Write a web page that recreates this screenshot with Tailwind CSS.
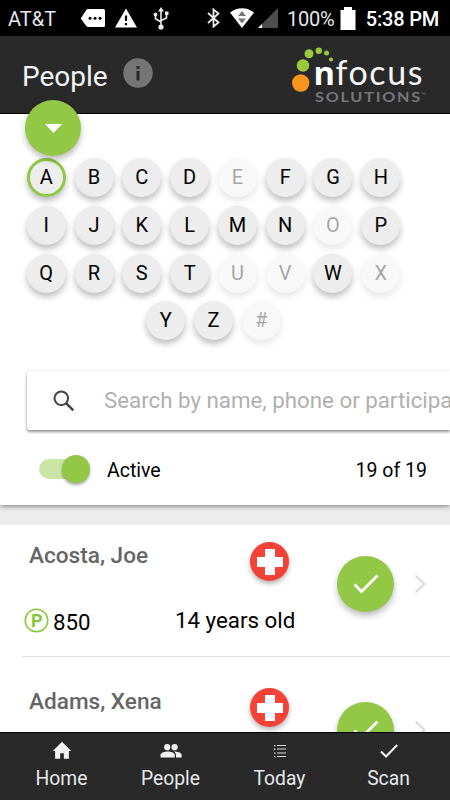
<!DOCTYPE html>
<html lang="en">
  <head>
    <meta charset="UTF-8" />
    <meta name="viewport" content="width=device-width, initial-scale=1.0" />
    <title>People - nFocus Solutions</title>
    <script src="https://cdn.jsdelivr.net/npm/@tailwindcss/browser@4"></script>
  </head>
  <body class="w-[450px] h-[800px] overflow-hidden flex flex-col bg-white font-['Roboto',sans-serif] text-black">
    <!-- Status bar -->
    <div class="h-[36px] shrink-0 bg-black text-white flex items-center pl-2 pr-[11px] text-[20px] leading-none">
      <span class="w-[72px] pt-px text-gray-200">AT&amp;T</span>
      <svg class="w-[26px] h-5 mt-px" viewBox="0 0 26 20">
        <path d="M8 0h15.500q1.500 0 1.500 1.500v15q0 1.500-1.500 1.500H8q-1 0-1.700-1L.7 9.500 6.300 1Q7 0 8 0z" fill="#fff" />
        <circle cx="10" cy="9.300" r="1.500" /><circle cx="15" cy="9.300" r="1.500" /><circle cx="20" cy="9.300" r="1.500" />
      </svg>
      <svg class="w-[22px] h-5 ml-[9px]" viewBox="0 0 22 20">
        <path d="M11 .5 22 19.500H0z" fill="#fff" />
        <path d="M9.900 7.500h2.200v5.500H9.900zM9.900 15h2.200v2.200H9.900z" />
      </svg>
      <svg class="w-4 h-[23px] ml-4" viewBox="0 0 16 23" fill="none" stroke="#eee" stroke-width="1.600">
        <path d="M8 3v16M2.500 8.500v3.200L8 15M13.500 7v4L8 13.500" />
        <path d="M8 0l3 4.500H5zM12 4.500h3.500V8H12z" fill="#eee" stroke="none" />
        <circle cx="2.500" cy="7.500" r="1.900" fill="#eee" stroke="none" />
        <circle cx="8" cy="20" r="2.600" fill="#eee" stroke="none" />
      </svg>
      <svg class="w-[14px] h-5 ml-[38px]" viewBox="0 0 14 20" fill="none" stroke="#eee" stroke-width="1.800">
        <path d="M1 5l10.500 9.500L6.500 18.500V1.500L11.500 5.500 1 15" />
      </svg>
      <svg class="w-6 h-5 ml-[9px]" viewBox="0 0 24 20">
        <path d="M0 4.500C7-1.200 17-1.200 24 4.500L12 20z" fill="#fff" />
        <path d="M12 3l4 5H8zM8 10.500h8l-4 5z" fill="#777" />
      </svg>
      <svg class="w-5 h-5 ml-[4px]" viewBox="0 0 20 20">
        <path d="M20 0v20H0z" fill="#4d4d4d" />
        <path d="M4 16v4H0z" fill="#fff" />
      </svg>
      <span class="ml-[9px] pt-px text-gray-200 tracking-[-0.2px]">100%</span>
      <svg class="w-4 h-[23px] ml-[5px]" viewBox="0 0 16 23">
        <path d="M4 0h8v3h3.500v20H.5V3H4z" fill="#fff" />
      </svg>
      <span class="ml-auto pt-px font-medium whitespace-nowrap tracking-[-0.2px]">5:38 PM</span>
    </div>

    <!-- Header -->
    <header class="relative z-10 h-[78px] shrink-0 bg-[#292929] border-b border-black flex items-start pl-[22px]">
      <h1 class="mt-[25px] text-[28px] leading-8 text-gray-100">People</h1>
      <svg class="w-[30px] h-[30px] mt-[22px] ml-[15px]" viewBox="0 0 30 30">
        <circle cx="15" cy="15" r="14.700" fill="#757575" />
        <path d="M13.500 8h3v3h-3zM13.500 13h3v9.500h-3z" fill="#292929" />
      </svg>
      <svg class="w-[140px] h-[64px] mt-[6px] ml-auto mr-[20px]" viewBox="290 42 140 64">
        <circle cx="300.700" cy="83" r="8.700" fill="#f7941e" />
        <g fill="#9aca3c">
          <circle cx="303" cy="65.500" r="6.200" />
          <circle cx="309" cy="53.700" r="4.500" />
          <circle cx="318.800" cy="50.700" r="3.200" />
          <circle cx="326.500" cy="53" r="2.500" />
          <circle cx="331" cy="59.500" r="2.100" />
        </g>
        <text x="313.500" y="84.500" textLength="21.500" lengthAdjust="spacingAndGlyphs" font-family="Open Sans" font-weight="700" font-size="33" fill="#fff">n</text>
        <text x="335.500" y="84.500" textLength="87" font-family="Lato" font-size="34" fill="#f5f5f5">focus</text>
        <text x="315" y="102" textLength="107" lengthAdjust="spacingAndGlyphs" letter-spacing="1.500" font-family="Lato" font-weight="700" font-size="13.500" fill="#77787b">SOLUTIONS</text>
        <text x="421" y="95" font-family="Lato" font-size="3" fill="#77787b">TM</text>
      </svg>
      <button class="absolute left-[25px] top-[64px] w-14 h-14 rounded-full bg-[#92c846] shadow-[0_4px_6px_rgba(0,0,0,0.26)] flex items-center justify-center">
        <svg class="w-[17px] h-[9px]" viewBox="0 0 17 9"><path d="M0 0h17L8.500 9z" fill="#fff" /></svg>
      </button>
    </header>

    <!-- Filter panel -->
    <section class="relative h-[391px] shrink-0 bg-white shadow-[0_1px_5px_rgba(0,0,0,0.5)]">
      <div id="letters" class="pt-[40px] pl-[22px] w-[405px] flex flex-wrap justify-center"></div>

      <div class="mt-[26px] ml-[27px] h-[59px] rounded-l-[3px] bg-white shadow-[0_2px_3px_rgba(0,0,0,0.4),0_0_3px_rgba(0,0,0,0.12)] flex items-center overflow-hidden">
        <svg class="w-[22px] h-[22px] ml-[26px] shrink-0" viewBox="0 0 22 22" fill="none" stroke="#444">
          <circle cx="8.300" cy="8.300" r="6.800" stroke-width="2" />
          <path d="M13.300 13.300l7 7" stroke-width="2.600" />
        </svg>
        <span class="ml-[29px] pt-px text-[22.300px] text-[#b0b0b0] whitespace-nowrap">Search by name, phone or participant ID</span>
      </div>

      <div class="mt-[25px] pl-[39px] pr-[23px] h-7 flex items-center text-[19.500px]">
        <div class="relative w-[51px] h-7 flex items-center">
          <div class="w-[48px] h-5 rounded-full bg-[#cbe5a6]"></div>
          <div class="absolute right-0 top-0 w-7 h-7 rounded-full bg-[#92c846] shadow-[0_2px_3px_rgba(0,0,0,0.35)]"></div>
        </div>
        <span class="ml-[17px] pt-[3px]">Active</span>
        <span class="ml-auto pt-[3px]">19 of 19</span>
      </div>
    </section>

    <!-- People list -->
    <main id="people" class="flex-1 min-h-0 overflow-hidden bg-[#ececec] pt-[20px]"></main>

    <!-- Bottom navigation -->
    <nav class="relative z-10 h-[68px] shrink-0 bg-[#292929] border-t border-black px-[7px] grid grid-cols-4 text-[19.300px] leading-6 text-gray-200">
      <a class="flex flex-col items-center">
        <svg class="w-[22px] h-[22px] mt-[7px]" viewBox="0 0 24 24" fill="#f2f2f2"><path d="M10 20.500v-6h4v6h5.500v-8.500H22L12 2 2 12h2.500v8.500z" /></svg>
        <span class="mt-[5px]">Home</span>
      </a>
      <a class="flex flex-col items-center">
        <svg class="w-6 h-[22px] mt-[7px]" viewBox="0 0 24 22" fill="#f2f2f2">
          <circle cx="8.200" cy="7.200" r="3.100" /><circle cx="15.600" cy="7.200" r="3.100" />
          <path d="M1.500 17.500v-2.200c0-2.700 4.800-3.700 7.200-3.700s7.100 1 7.100 3.700v2.200zM17 17.500v-2.200c0-1.600-.9-2.700-2-3.700 3 0 7.700 1 7.700 3.700v2.200z" />
        </svg>
        <span class="mt-[5px]">People</span>
      </a>
      <a class="flex flex-col items-center">
        <svg class="w-3 h-[22px] mt-[7px]" viewBox="0 0 12 22" fill="#ddd">
          <path d="M0 5h1.500v1.200H0zM3 5h9v1.100H3zM0 8.500h1.500v1.200H0zM3 8.500h9v1.100H3zM0 12.500h1.500v1.200H0zM3 12.500h9v1.100H3zM0 16h1.500v1.200H0zM3 16h9v1.100H3z" />
        </svg>
        <span class="mt-[5px]">Today</span>
      </a>
      <a class="flex flex-col items-center">
        <svg class="w-[18px] h-[22px] mt-[7px]" viewBox="0 0 18 22" fill="none" stroke="#f2f2f2" stroke-width="2.100"><path d="M1 11.500l5 5L17.200 5" /></svg>
        <span class="mt-[5px]">Scan</span>
      </a>
    </nav>

    <script>
      const selected = "A";
      const empty = "EOUVX#";

      document.getElementById("letters").innerHTML = [..."ABCDEFGHIJKLMNOPQRSTUVWXYZ#"]
        .map((letter) => {
          const ring = letter === selected ? "border-[3px] border-[#92c846]" : "";
          const state = empty.includes(letter) ? "opacity-35" : "";
          return `
            <div class="w-[47.800px] h-[47.800px] flex justify-center pt-[4px]">
              <button class="w-[39px] h-[39px] pb-px rounded-full bg-[#ededed] text-[20px] leading-none flex items-center justify-center shadow-[0_4px_6px_rgba(0,0,0,0.26)] ${ring} ${state}">${letter}</button>
            </div>`;
        })
        .join("");

      const people = [
        { name: "Acosta, Joe", points: 850, age: 14 },
        { name: "Adams, Xena" },
      ];

      const pointsLine = (points) => `
        <div class="mt-[38px] flex items-center text-[22.300px] leading-7">
          <svg class="w-[25px] h-[25px] -mt-[3px] mr-[4px]" viewBox="0 0 25 25">
            <circle cx="12.500" cy="12.500" r="11.300" fill="none" stroke="#86c83a" stroke-width="1.500" />
            <text x="12.700" y="19" text-anchor="middle" font-family="Roboto" font-weight="700" font-size="18" fill="#86c83a">P</text>
          </svg>
          <span>${points}</span>
        </div>`;

      const ageLine = (age) => `<div class="mt-[25px] text-[22.300px] leading-7">${age} years old</div>`;

      document.getElementById("people").innerHTML = people
        .map(
          (p, i) => `
            <article class="bg-white ${i ? "pt-[14px]" : ""}">
              <div class="h-[131px] flex">
                <div class="w-[175px] pl-[24px]">
                  <h2 class="mt-[17px] pl-[5px] text-[22.600px] leading-7 font-medium text-[#666] whitespace-nowrap">${p.name}</h2>
                  ${p.points ? pointsLine(p.points) : ""}
                </div>
                <div class="w-[162px]">
                  <div class="mt-[17px] ml-[75px] w-[39px] h-[39px] rounded-full bg-[#f44336] shadow-[0_3px_5px_rgba(0,0,0,0.28)] flex items-center justify-center">
                    <svg class="w-[26px] h-[26px]" viewBox="0 0 26 26" fill="#fff"><path d="M8 0h10v8h8v10h-8v8H8v-8H0V8h8z" /></svg>
                  </div>
                  ${p.age ? ageLine(p.age) : ""}
                </div>
                <button class="mt-[31px] w-[57px] h-[56px] rounded-full bg-[#92c846] shadow-[0_4px_6px_rgba(0,0,0,0.26)] flex items-center justify-center">
                  <svg class="w-[26px] h-5" viewBox="0 0 26 20" fill="none" stroke="#fff" stroke-width="2.800"><path d="M1.500 10.500l7 7L24.500 1.500" /></svg>
                </button>
                <svg class="mt-[49px] ml-[20px] w-3 h-5" viewBox="0 0 12 20" fill="none" stroke="#dcdcdc" stroke-width="2.300"><path d="M1.500 1.500l9 8.500-9 8.500" /></svg>
              </div>
              <div class="ml-[22px] h-[1px] bg-[#dedede]"></div>
            </article>`
        )
        .join("");
    </script>
  </body>
</html>
